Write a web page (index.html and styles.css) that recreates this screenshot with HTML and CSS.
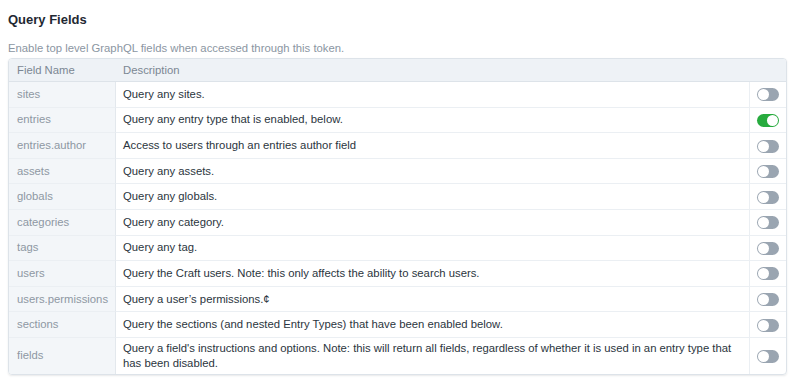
FILE: index.html
```html
<!DOCTYPE html>
<html>
<head>
  <title>Query Fields</title>
  <link rel="stylesheet" href="styles.css">
</head>
<body>
  <div class="field">
    <h2>Query Fields</h2>
    <p class="instructions">Enable top level GraphQL fields when accessed through this token.</p>

    <table class="schema-table">
      <thead>
        <tr>
          <th class="name-col">Field Name</th>
          <th>Description</th>
          <th class="toggle-col"></th>
        </tr>
      </thead>
      <tbody>
        <tr>
          <td class="name-col">sites</td>
          <td>Query any sites.</td>
          <td class="toggle-col"><span class="lightswitch"></span></td>
        </tr>
        <tr>
          <td class="name-col">entries</td>
          <td>Query any entry type that is enabled, below.</td>
          <td class="toggle-col"><span class="lightswitch on"></span></td>
        </tr>
        <tr>
          <td class="name-col">entries.author</td>
          <td>Access to users through an entries author field</td>
          <td class="toggle-col"><span class="lightswitch"></span></td>
        </tr>
        <tr>
          <td class="name-col">assets</td>
          <td>Query any assets.</td>
          <td class="toggle-col"><span class="lightswitch"></span></td>
        </tr>
        <tr>
          <td class="name-col">globals</td>
          <td>Query any globals.</td>
          <td class="toggle-col"><span class="lightswitch"></span></td>
        </tr>
        <tr>
          <td class="name-col">categories</td>
          <td>Query any category.</td>
          <td class="toggle-col"><span class="lightswitch"></span></td>
        </tr>
        <tr>
          <td class="name-col">tags</td>
          <td>Query any tag.</td>
          <td class="toggle-col"><span class="lightswitch"></span></td>
        </tr>
        <tr>
          <td class="name-col">users</td>
          <td>Query the Craft users. Note: this only affects the ability to search users.</td>
          <td class="toggle-col"><span class="lightswitch"></span></td>
        </tr>
        <tr>
          <td class="name-col">users.permissions</td>
          <td>Query a user’s permissions.¢</td>
          <td class="toggle-col"><span class="lightswitch"></span></td>
        </tr>
        <tr>
          <td class="name-col">sections</td>
          <td>Query the sections (and nested Entry Types) that have been enabled below.</td>
          <td class="toggle-col"><span class="lightswitch"></span></td>
        </tr>
        <tr>
          <td class="name-col">fields</td>
          <td>Query a field's instructions and options. Note: this will return all fields, regardless of whether it is used in an entry type that<br>has been disabled.</td>
          <td class="toggle-col"><span class="lightswitch"></span></td>
        </tr>
      </tbody>
    </table>
  </div>
</body>
</html>
```

FILE: styles.css
```css
body {
  margin: 0;
  padding: 12px 8px;
  font-family: 'Liberation Sans', Arial, sans-serif;
  color: #333f4d;
  background-color: #ffffff;
}

h2 {
  margin: 0;
  font-size: 13px;
  font-weight: 700;
  line-height: 16px;
  color: #1f2933;
}

.instructions {
  margin: 13px 0 3px;
  font-size: 11.3px;
  line-height: 14px;
  color: #8b96a2;
}

.schema-table {
  width: 779px;
  border-collapse: separate;
  border-spacing: 0;
  border: 1px solid #dde3e9;
  border-radius: 4px;
  box-shadow: 0 1px 2px rgba(31, 41, 51, 0.1);
  overflow: hidden;
  font-size: 11.3px;
}

.schema-table th {
  height: 22px;
  padding: 0 7px;
  text-align: left;
  font-weight: 400;
  color: #7b8793;
  background-color: #eef2f6;
  border-bottom: 1px solid #dde3e9;
}

.schema-table td {
  height: 24.6px;
  padding: 0 7px;
  line-height: 15px;
  color: #2b3540;
  border-bottom: 1px solid #ebeff3;
}

.schema-table tbody tr:last-child td {
  height: 36px;
  border-bottom: none;
}

.schema-table .name-col {
  width: 91px;
  padding-left: 8px;
  color: #8e98a3;
  background-color: #f3f6f9;
  border-right: 1px solid #e3e8ed;
}

.schema-table th.name-col {
  color: #7b8793;
  background-color: #eef2f6;
  border-right: none;
}

.schema-table .toggle-col {
  width: 22px;
  text-align: center;
  border-left: 1px solid #ebeff3;
}

.schema-table th.toggle-col {
  border-left: none;
}

.lightswitch {
  display: inline-block;
  position: relative;
  width: 22px;
  height: 13px;
  border-radius: 7px;
  background-color: #9aa5b1;
  vertical-align: middle;
}

.lightswitch::after {
  content: '';
  position: absolute;
  top: 1px;
  left: 1px;
  width: 11px;
  height: 11px;
  border-radius: 50%;
  background-color: #ffffff;
}

.lightswitch.on {
  background-color: #27ab3e;
}

.lightswitch.on::after {
  left: 10px;
}
```
